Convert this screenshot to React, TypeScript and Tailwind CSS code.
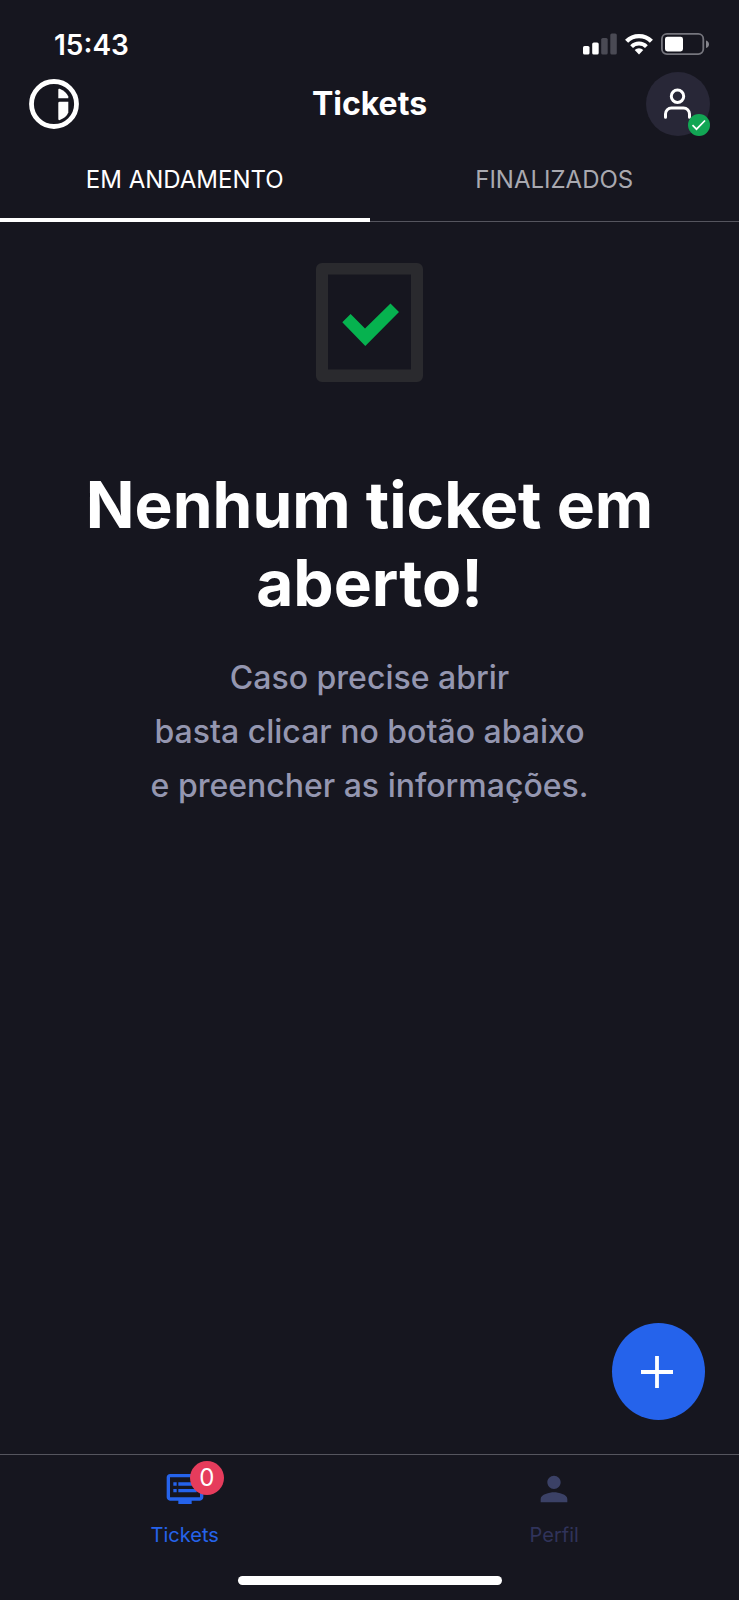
import { useState } from "react";
import { MdDvr, MdPerson } from "react-icons/md";

function SignalIcon() {
  return (
    <svg width="34" height="22" viewBox="0 0 34 22" aria-hidden="true">
      <rect x="0" y="13" width="6.5" height="8.5" rx="1.6" fill="#fff" />
      <rect x="9.2" y="9.5" width="6.5" height="12" rx="1.6" fill="#fff" />
      <rect x="18.2" y="5" width="6.5" height="16.5" rx="1.6" fill="#4a4a54" />
      <rect x="27.3" y="0.5" width="6.5" height="21" rx="1.6" fill="#4a4a54" />
    </svg>
  );
}

function WifiIcon() {
  return (
    <svg width="28" height="22" viewBox="0 0 28 22" aria-hidden="true">
      <path d="M1.6 8.2a17.6 17.6 0 0 1 24.8 0" fill="none" stroke="#fff" strokeWidth="4.4" />
      <path d="M6.6 13.6a10.6 10.6 0 0 1 14.8 0" fill="none" stroke="#fff" strokeWidth="4" />
      <path d="M14 21.5l-4.3-4.4a6.2 6.2 0 0 1 8.6 0z" fill="#fff" />
    </svg>
  );
}

function BatteryIcon() {
  return (
    <svg width="49" height="22" viewBox="0 0 49 22" aria-hidden="true">
      <rect x="0.9" y="0.9" width="41.4" height="20.2" rx="5" fill="none" stroke="#75757d" strokeWidth="1.8" />
      <rect x="4" y="3.7" width="18" height="14.8" rx="2.4" fill="#fff" />
      <path d="M45 7.4c1.8.5 3 2 3 3.8s-1.2 3.3-3 3.8z" fill="#85858c" />
    </svg>
  );
}

function Logo() {
  return (
    <svg width="50" height="50" viewBox="0 0 50 50" aria-hidden="true">
      <circle cx="25" cy="25" r="22.5" fill="none" stroke="#fff" strokeWidth="4.8" />
      <path d="M29.3 10.8q0-1.500 1.400-1Q37 12.300 39.300 17.600V19.300H29.300z" fill="#fff" />
      <path d="M30.700 22.700h8.600V33.500Q37.500 38.500 30.800 41q-1.500.5-1.500-1V24.100Q29.300 22.700 30.700 22.700z" fill="#fff" />
    </svg>
  );
}

function AvatarIcon() {
  return (
    <svg width="32" height="32" viewBox="0 0 32 32" fill="none" stroke="#fff" strokeWidth="3" strokeLinecap="round" aria-hidden="true">
      <circle cx="15.5" cy="8.2" r="6.2" />
      <path d="M3.5 29.2v-3.2a6 6 0 0 1 6-6h12a6 6 0 0 1 6 6v3.2" />
    </svg>
  );
}

function TicketDone() {
  return (
    <svg width="107" height="119" viewBox="0 0 107 119" aria-hidden="true">
      <path
        fillRule="evenodd"
        fill="#2a2a2e"
        d="M6 0h95a6 6 0 0 1 6 6v107a6 6 0 0 1-6 6H6a6 6 0 0 1-6-6V6a6 6 0 0 1 6-6zM12 11.5v95h83v-95z"
      />
      <path fill="#06b24f" d="M26.3 59.3l8.3-8.3L49 65.6l25.5-25 8.5 8.4-33.7 34z" />
    </svg>
  );
}

const tabs = ["EM ANDAMENTO", "FINALIZADOS"];

export default function App() {
  const [active, setActive] = useState(0);

  return (
    <div className="flex min-h-screen flex-col bg-[#16161f] font-['Inter',sans-serif] text-white">
      <div className="flex h-[68px] items-end justify-between pr-[29px] pl-[54px]">
        <time className="h-[40px] text-[28px] leading-[34px] font-semibold">15:43</time>
        <div className="mb-[13px] flex items-center gap-2">
          <SignalIcon />
          <WifiIcon />
          <BatteryIcon />
        </div>
      </div>

      <header className="grid h-[72px] grid-cols-3 items-center px-[29px]">
        <a href="#inicio" aria-label="Início" className="justify-self-start">
          <Logo />
        </a>
        <h1 className="text-center text-[32px] leading-[40px] font-bold">Tickets</h1>
        <button
          type="button"
          aria-label="Conta"
          className="relative flex size-16 items-center justify-center justify-self-end rounded-full bg-[#282737]"
        >
          <AvatarIcon />
          <span className="absolute right-0 bottom-0 flex size-[22px] items-center justify-center rounded-full bg-[#12a654]">
            <svg width="16" height="12" viewBox="0 0 16 12" fill="none" stroke="#fff" strokeWidth="1.7" aria-hidden="true">
              <path d="M1.5 6.2l4 4L14 1.5" />
            </svg>
          </span>
        </button>
      </header>

      <div role="tablist" className="grid h-[82px] grid-cols-2 border-b border-[#55555e]">
        {tabs.map((label, i) => (
          <button
            key={label}
            type="button"
            role="tab"
            aria-selected={active === i}
            onClick={() => setActive(i)}
            className={
              active === i
                ? "-mb-px border-b-4 border-white pt-px text-2xl font-normal text-white"
                : "-mb-px border-b-4 border-transparent pt-px text-2xl font-normal text-[#a9a9b0]"
            }
          >
            {label}
          </button>
        ))}
      </div>

      <main className="relative flex flex-1 flex-col items-center px-10 pt-[41px] text-center">
        <TicketDone />
        <h2 className="mt-[84px] text-[64px] leading-[78px] font-bold">
          Nenhum ticket em
          <br />
          aberto!
        </h2>
        <p className="mt-[29px] text-[32px] leading-[54px] font-medium text-[#9496b0]">
          Caso precise abrir
          <br />
          basta clicar no botão abaixo
          <br />e preencher as informações.
        </p>
        <button
          type="button"
          aria-label="Abrir ticket"
          className="absolute right-[34px] bottom-[34px] flex h-[97px] w-[93px] items-center justify-center rounded-[50%] bg-[#2563eb]"
        >
          <svg width="36" height="32" viewBox="0 0 36 32" stroke="#fff" strokeWidth="3.8" aria-hidden="true">
            <path d="M0 16h32M16 0v32" />
          </svg>
        </button>
      </main>

      <footer className="border-t border-[#55555e] pb-[15px]">
        <nav className="grid h-[121px] grid-cols-2 text-xl leading-6">
          <a href="#tickets" className="flex flex-col items-center pt-[14px] text-[#2563eb]">
            <span className="relative">
              <MdDvr className="size-10" aria-hidden="true" />
              <span className="absolute -top-2 left-[25px] flex size-[34px] items-center justify-center rounded-full bg-[#e63c5c] text-2xl font-normal text-white">
                0
              </span>
            </span>
            <span className="mt-[14px]">Tickets</span>
          </a>
          <a href="#perfil" className="flex flex-col items-center pt-[14px] text-[#30335a]">
            <MdPerson className="size-10 text-[#3b4166]" aria-hidden="true" />
            <span className="mt-[14px]">Perfil</span>
          </a>
        </nav>
        <div className="mx-auto h-[9px] w-[264px] rounded-full bg-white" />
      </footer>
    </div>
  );
}
